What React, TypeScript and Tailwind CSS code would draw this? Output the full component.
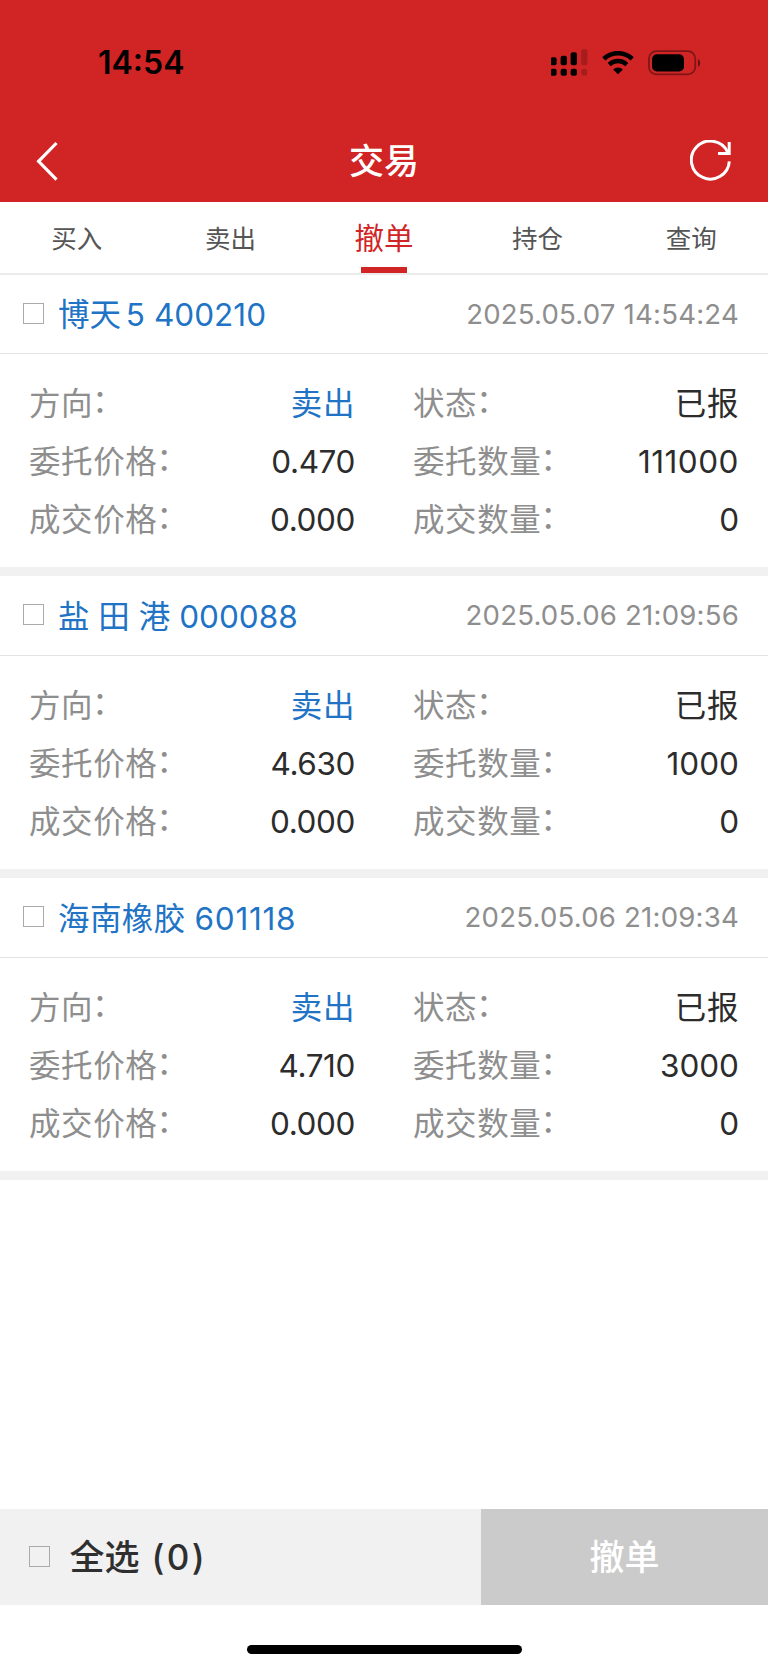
import { useState } from 'react';
import clsx from 'clsx';

interface Order {
  id: number;
  name: string;
  code: string;
  time: string;
  side: string;
  status: string;
  price: string;
  amount: string;
  dealPrice: string;
  dealAmount: string;
}

const TABS = ['买入', '卖出', '撤单', '持仓', '查询'];

const ORDERS: Order[] = [
  {
    id: 1,
    name: '博天 5',
    code: '400210',
    time: '2025.05.07 14:54:24',
    side: '卖出',
    status: '已报',
    price: '0.470',
    amount: '111000',
    dealPrice: '0.000',
    dealAmount: '0',
  },
  {
    id: 2,
    name: '盐 田 港',
    code: '000088',
    time: '2025.05.06 21:09:56',
    side: '卖出',
    status: '已报',
    price: '4.630',
    amount: '1000',
    dealPrice: '0.000',
    dealAmount: '0',
  },
  {
    id: 3,
    name: '海南橡胶',
    code: '601118',
    time: '2025.05.06 21:09:34',
    side: '卖出',
    status: '已报',
    price: '4.710',
    amount: '3000',
    dealPrice: '0.000',
    dealAmount: '0',
  },
];

function StatusBar() {
  return (
    <div className="flex h-[125px] items-center justify-between pl-[98px] pr-[67px] text-black">
      <span className="pt-px text-[32px] leading-none font-semibold">14:54</span>
      <div className="flex items-center">
        <svg width="38" height="28" viewBox="0.4 0.7 38 28" className="mr-[13px]">
          <rect x="0" y="9" width="6" height="8" rx="2" />
          <rect x="10" y="7.5" width="6.3" height="9.5" rx="2" />
          <rect x="20" y="4" width="6.3" height="13" rx="2" />
          <rect x="30.5" y="1" width="6.3" height="16" rx="2" opacity="0.2" />
          <rect x="0" y="20.5" width="6" height="7" rx="2" />
          <rect x="10" y="20.5" width="6.3" height="7" rx="2" />
          <rect x="20" y="20.5" width="6.3" height="7" rx="2" />
          <rect x="30.5" y="20.5" width="6.3" height="7" rx="3" opacity="0.2" />
        </svg>
        <svg width="32" height="24" viewBox="0 0 32 24" className="mr-[14px]">
          <path d="M1.8 7.9a20.5 20.5 0 0 1 28.4 0" fill="none" stroke="black" strokeWidth="4.6" />
          <path d="M7.2 13.6a12.6 12.6 0 0 1 17.6 0" fill="none" stroke="black" strokeWidth="4.3" />
          <path d="M16 23.2l-4.9-4.7a7 7 0 0 1 9.8 0z" />
        </svg>
        <svg width="53" height="26" viewBox="0 0 53 26">
          <rect x="0.9" y="1.2" width="46.4" height="23.2" rx="7.5" fill="none" stroke="black" strokeOpacity="0.4" strokeWidth="1.7" />
          <rect x="4" y="4.2" width="32" height="17.2" rx="5" />
          <path d="M50 9v8c1.3-.6 2.2-2.2 2.2-4S51.3 9.6 50 9z" opacity="0.5" />
        </svg>
      </div>
    </div>
  );
}

function Checkbox({ checked, onClick }: { checked: boolean; onClick: () => void }) {
  return (
    <button
      onClick={onClick}
      className={clsx('mb-[2px] size-[21px] shrink-0 border border-[#aaaaaa]', checked && 'bg-[#d12425]')}
    />
  );
}

function Field({ label, value }: { label: string; value: string }) {
  const spacing = value.includes('.')
    ? 'tracking-[-0.4px]'
    : value.startsWith('11')
      ? 'tracking-[0.5px]'
      : 'tracking-normal';

  return (
    <div className="flex h-[58px] items-center justify-between pt-px">
      <span className="flex tracking-[0.6px] text-[#8e8e8e]">
        {label}
        <span className="-mt-[3px] -ml-px pb-[3px] font-['Noto_Sans_CJK_JP',sans-serif] [font-feature-settings:'halt']">：</span>
      </span>
      {/^[\d.]+$/.test(value) ? (
        <span className={clsx('text-[#2c2c2c]', spacing)}>{value}</span>
      ) : (
        <span className={clsx('tracking-[0.6px]', value === '卖出' ? 'text-[#2173c5]' : 'text-[#2c2c2c]')}>
          {value}
        </span>
      )}
    </div>
  );
}

export default function App() {
  const [activeTab, setActiveTab] = useState('撤单');
  const [selected, setSelected] = useState<number[]>([]);

  const toggle = (id: number) => {
    setSelected((prev) => (prev.includes(id) ? prev.filter((x) => x !== id) : [...prev, id]));
  };

  const toggleAll = () => {
    setSelected(selected.length === ORDERS.length ? [] : ORDERS.map((o) => o.id));
  };

  return (
    <div className="flex h-[1670px] w-[768px] flex-col bg-white font-['Inter','Noto_Sans_CJK_SC',sans-serif]">
      <header className="h-[202px] shrink-0 bg-[#d12425]">
        <StatusBar />
        <div className="flex h-[72px] items-center justify-between px-[36px]">
          <svg width="42" height="40" viewBox="0 0 42 40" fill="none" stroke="white" strokeWidth="3.2">
            <path d="M20.5 2L2.6 20.3l17.9 18.4" />
          </svg>
          <h1 className="pt-px text-[35px] leading-none font-medium text-white">交易</h1>
          <svg width="42" height="42" viewBox="0 0 42 42" fill="none" stroke="white" strokeWidth="3">
            <path d="M39.3 21.3A19 19 0 1 1 37.3 11.5L39 14" />
            <path d="M39.2 2v11.5H28" />
          </svg>
        </div>
      </header>

      <nav className="flex h-[73px] shrink-0 border-b-2 border-[#ebebeb]">
        {TABS.map((tab) => (
          <button
            key={tab}
            onClick={() => setActiveTab(tab)}
            className={clsx(
              'relative flex-1 pt-[2px] leading-none',
              tab === activeTab ? 'text-[29.5px] text-[#d12425]' : 'text-[25.5px] text-[#555555]'
            )}
          >
            {tab}
            {tab === activeTab && (
              <span className="absolute bottom-0 left-1/2 h-[6px] w-[46px] -translate-x-1/2 bg-[#d12425]" />
            )}
          </button>
        ))}
      </nav>

      <main className="flex-1">
        {ORDERS.map((order, i) => (
          <section key={order.id} className="border-b-[9px] border-[#f1f1f1] text-[31.5px] leading-none">
            <div
              className={clsx(
                'flex items-center border-b border-[#e3e3e3] pr-[29px] pl-[23px]',
                i === 0 ? 'h-[79px]' : 'h-[80px]'
              )}
            >
              <Checkbox checked={selected.includes(order.id)} onClick={() => toggle(order.id)} />
              <div className="ml-[14px] flex flex-1 gap-[9px] pt-[2px] text-[#2173c5]">
                <span className={clsx(i === 0 && '[word-spacing:-4px]', i === 2 && 'tracking-[0.4px]')}>
                  {order.name}
                </span>
                <span className={clsx(i === 2 && 'tracking-[0.7px]')}>{order.code}</span>
              </div>
              <span className="pt-px text-[27.6px] tracking-[0.2px] text-[#8e8e8e]">{order.time}</span>
            </div>
            <div className="grid grid-cols-2 pt-[20px] pb-[19px]">
              <div className="px-[29px]">
                <Field label="方向" value={order.side} />
                <Field label="委托价格" value={order.price} />
                <Field label="成交价格" value={order.dealPrice} />
              </div>
              <div className="px-[29px]">
                <Field label="状态" value={order.status} />
                <Field label="委托数量" value={order.amount} />
                <Field label="成交数量" value={order.dealAmount} />
              </div>
            </div>
          </section>
        ))}
      </main>

      <footer className="shrink-0">
        <div className="flex h-[96px] text-[35px] leading-none font-medium">
          <div className="flex w-[481px] items-center bg-[#f1f1f1] pl-[28.500px] text-[#2f2f2f]">
            <Checkbox checked={selected.length === ORDERS.length} onClick={toggleAll} />
            <span className="ml-[20px] pt-px">全选</span>
            <span className="ml-[12px] pt-px tracking-[2.3px]">({selected.length})</span>
          </div>
          <button className="flex-1 bg-[#cbcbcb] pt-px text-white">撤单</button>
        </div>
        <div className="flex h-[65px] justify-center pt-[40px]">
          <div className="h-[9px] w-[275px] rounded-full bg-black" />
        </div>
      </footer>
    </div>
  );
}
